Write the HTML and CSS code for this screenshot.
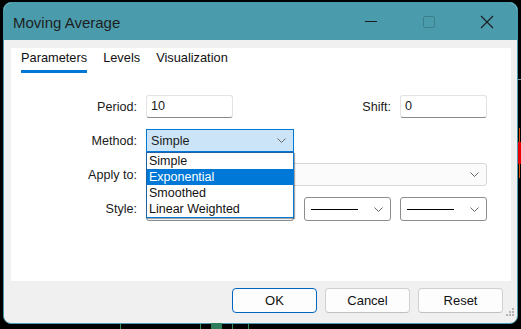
FILE: index.html
```html
<!DOCTYPE html>
<html lang="en">
<head>
    <meta charset="UTF-8">
    <title>Moving Average</title>
    <link rel="stylesheet" href="styles.css">
</head>
<body>
    <!-- chart bits peeking out behind the dialog -->
    <div class="chart-line" style="left:120px"></div>
    <div class="chart-line" style="left:200px"></div>
    <div class="chart-line" style="left:232px"></div>
    <div class="chart-line" style="left:248px"></div>
    <div class="chart-bar"></div>
    <div class="chart-grid"></div>
    <div class="chart-wick"></div>
    <div class="chart-candle"></div>

    <div class="window">
        <div class="titlebar">
            <span class="title">Moving Average</span>
            <div class="controls">
                <svg class="ctl" width="58" height="38" viewBox="0 0 58 38"><line x1="23" y1="18.5" x2="35" y2="18.5" stroke="#1c1c1c" stroke-width="1"/></svg>
                <svg class="ctl" width="58" height="38" viewBox="0 0 58 38"><rect x="23.5" y="13.5" width="11" height="11" rx="1.5" fill="none" stroke="#3d7f8c" stroke-width="1"/></svg>
                <svg class="ctl" width="58" height="38" viewBox="0 0 58 38"><path d="M23 13 L35 25 M35 13 L23 25" stroke="#1c1c1c" stroke-width="1.1"/></svg>
            </div>
        </div>

        <div class="body">
            <div class="panel">
                <div class="tabs">
                    <div class="tab active">Parameters</div>
                    <div class="tab">Levels</div>
                    <div class="tab">Visualization</div>
                </div>

                <div class="form">
                    <div class="row">
                        <label class="lbl">Period:</label>
                        <div class="input">10</div>
                        <label class="lbl lbl-right">Shift:</label>
                        <div class="input">0</div>
                    </div>

                    <div class="row">
                        <label class="lbl">Method:</label>
                        <div class="select wide open">
                            <span>Simple</span>
                            <svg class="chev" width="9" height="5" viewBox="0 0 9 5"><path d="M0.5 0.5 L4.5 4.5 L8.5 0.5" fill="none" stroke="#666" stroke-width="1"/></svg>
                            <ul class="list">
                                <li>Simple</li>
                                <li class="sel">Exponential</li>
                                <li>Smoothed</li>
                                <li>Linear Weighted</li>
                            </ul>
                        </div>
                    </div>

                    <div class="row">
                        <label class="lbl">Apply to:</label>
                        <div class="select full disabled">
                            <span></span>
                            <svg class="chev" width="9" height="5" viewBox="0 0 9 5"><path d="M0.5 0.5 L4.5 4.5 L8.5 0.5" fill="none" stroke="#666" stroke-width="1"/></svg>
                        </div>
                    </div>

                    <div class="row">
                        <label class="lbl">Style:</label>
                        <div class="select wide style">
                            <span class="dash"></span>
                            <svg class="chev" width="9" height="5" viewBox="0 0 9 5"><path d="M0.5 0.5 L4.5 4.5 L8.5 0.5" fill="none" stroke="#666" stroke-width="1"/></svg>
                        </div>
                        <div class="select small style gap10">
                            <span class="dash"></span>
                            <svg class="chev" width="9" height="5" viewBox="0 0 9 5"><path d="M0.5 0.5 L4.5 4.5 L8.5 0.5" fill="none" stroke="#666" stroke-width="1"/></svg>
                        </div>
                        <div class="select small style gap9">
                            <span class="dash"></span>
                            <svg class="chev" width="9" height="5" viewBox="0 0 9 5"><path d="M0.5 0.5 L4.5 4.5 L8.5 0.5" fill="none" stroke="#666" stroke-width="1"/></svg>
                        </div>
                    </div>
                </div>
            </div>

            <div class="footer">
                <button class="btn primary">OK</button>
                <button class="btn">Cancel</button>
                <button class="btn">Reset</button>
                <svg class="grip" width="10" height="10" viewBox="0 0 10 10">
                    <rect x="7" y="1" width="2" height="2" fill="#b5b5b5"/>
                    <rect x="4" y="4" width="2" height="2" fill="#b5b5b5"/>
                    <rect x="7" y="4" width="2" height="2" fill="#b5b5b5"/>
                    <rect x="1" y="7" width="2" height="2" fill="#b5b5b5"/>
                    <rect x="4" y="7" width="2" height="2" fill="#b5b5b5"/>
                    <rect x="7" y="7" width="2" height="2" fill="#b5b5b5"/>
                </svg>
            </div>
        </div>
    </div>
</body>
</html>
```

FILE: styles.css
```css
body {
    margin: 0;
    width: 521px;
    height: 329px;
    overflow: hidden;
    background: #000;
    font-family: "Liberation Sans", Arial, sans-serif;
    font-size: 12.6px;
    color: #1a1a1a;
    position: relative;
}

/* chart behind */
.chart-line {
    position: absolute;
    top: 324px;
    width: 1px;
    height: 5px;
    background: #2f8f5f;
}
.chart-bar {
    position: absolute;
    left: 211px;
    top: 323px;
    width: 11px;
    height: 6px;
    background: #2e7d5b;
}
.chart-grid {
    position: absolute;
    left: 518px;
    top: 79px;
    width: 3px;
    height: 1px;
    background: #7f93a6;
}
.chart-wick {
    position: absolute;
    left: 519px;
    top: 128px;
    width: 1px;
    height: 50px;
    background: #d84a00;
}
.chart-candle {
    position: absolute;
    left: 518px;
    top: 142px;
    width: 3px;
    height: 22px;
    background: #e80000;
}

.window {
    margin: 2px 0 0 3px;
    width: 515px;
    height: 322px;
    box-sizing: border-box;
    border: 1px solid #4a9cad;
    border-radius: 8px;
    overflow: hidden;
    background: #f0f0f0;
    display: flex;
    flex-direction: column;
}

.titlebar {
    height: 37px;
    background: #4a9cad;
    display: flex;
    align-items: center;
    padding-left: 9px;
}
.title {
    font-size: 15px;
    color: #1e1e1e;
    margin-top: 1px;
}
.controls {
    margin-left: auto;
    display: flex;
    margin-right: 1px;
}
.ctl {
    display: block;
}

.body {
    flex: 1;
    display: flex;
    flex-direction: column;
    padding: 8px 6px 0 7px;
}

.panel {
    height: 233px;
    background: #fff;
    padding: 0 24px 0 10px;
    box-sizing: border-box;
}

.tabs {
    display: flex;
    gap: 16px;
    padding-top: 2px;
}
.tab {
    line-height: 16px;
    padding-bottom: 7px;
    color: #111;
    font-size: 12.8px;
}
.tab.active {
    border-bottom: 3px solid #0078d7;
    padding-bottom: 4px;
}

.form {
    margin-top: 22px;
    display: flex;
    flex-direction: column;
    gap: 11px;
}
.row {
    display: flex;
    align-items: center;
    height: 23px;
}
.row:last-child {
    height: 24px;
}
.lbl {
    width: 116px;
    flex-shrink: 0;
    margin-right: 9px;
    text-align: right;
}
.lbl-right {
    width: auto;
    margin-left: auto;
}

.input {
    width: 87px;
    height: 23px;
    box-sizing: border-box;
    border: 1px solid #e3e3e3;
    border-bottom-color: #8a8a8a;
    border-radius: 3px;
    padding: 0 4px;
    line-height: 21px;
    background: #fff;
}

.select {
    position: relative;
    flex-shrink: 0;
    height: 23px;
    box-sizing: border-box;
    border: 1px solid #8c8c8c;
    border-radius: 3px;
    display: flex;
    align-items: center;
    padding: 0 7px 0 4px;
    background: #fff;
}
.select span {
    flex: 1;
}
.chev {
    display: block;
}
.select.wide {
    width: 148px;
}
.select.small {
    width: 87px;
}
.select.full {
    width: 341px;
}
.select.open {
    background: #cce4f7;
    border-color: #0078d7;
    border-radius: 0;
}
.select.disabled {
    background: #fbfbfb;
    border-color: #d8d8d8;
}
.select.style {
    height: 24px;
    padding-left: 6px;
}
.gap10 {
    margin-left: 10px;
}
.gap9 {
    margin-left: 9px;
}
.dash {
    height: 1px;
    background: #000;
    margin-right: 16px;
}

.list {
    position: absolute;
    z-index: 2;
    left: -1px;
    top: 22px;
    width: 148px;
    height: 66px;
    box-sizing: border-box;
    margin: 0;
    padding: 0;
    list-style: none;
    background: #fff;
    border: 1px solid #1f5fa6;
    border-right-color: #0078d7;
    border-bottom-color: #0078d7;
    box-shadow: 1px 1px 1px rgba(0, 0, 0, 0.35);
}
.list li {
    height: 16px;
    line-height: 16px;
    padding-left: 2px;
    font-size: 12.5px;
    color: #111;
}
.list li.sel {
    background: #0078d7;
    color: #fff;
}

.footer {
    display: flex;
    justify-content: flex-end;
    gap: 8px;
    padding: 7px 8px 0 0;
    position: relative;
}
.btn {
    width: 85px;
    height: 25px;
    box-sizing: border-box;
    border: 1px solid #d0d0d0;
    border-bottom-color: #c0c0c0;
    border-radius: 4px;
    background: #fdfdfd;
    font-family: inherit;
    font-size: 13px;
    color: #111;
    padding: 0;
}
.btn.primary {
    border-color: #0067c0;
}
.grip {
    position: absolute;
    right: -4px;
    top: 26px;
}
```
